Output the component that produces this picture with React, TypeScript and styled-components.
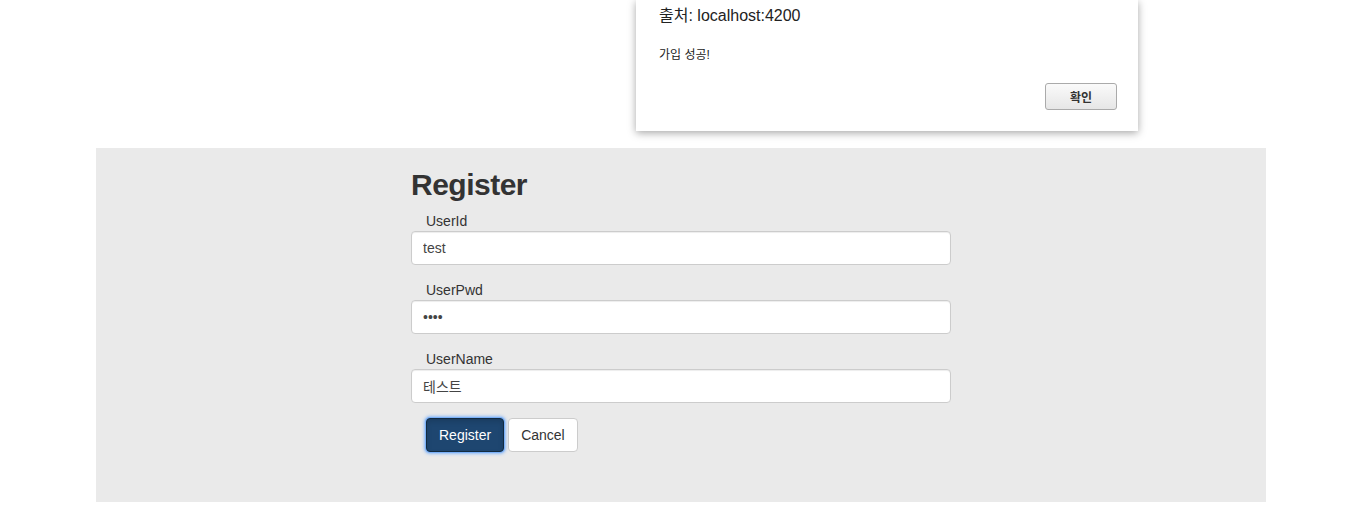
import React from 'react';
import styled, { createGlobalStyle } from 'styled-components';

const GlobalStyle = createGlobalStyle`
  html, body {
    margin: 0;
    padding: 0;
    background: #ffffff;
    font-family: "Liberation Sans", "Noto Sans CJK KR", Arial, sans-serif;
    font-size: 14px;
    color: #333333;
  }
  * {
    box-sizing: border-box;
  }
`;

const Page = styled.div`
  position: relative;
  width: 1350px;
  min-height: 527px;
  padding-top: 148px;
`;

const Panel = styled.section`
  margin-left: 96px;
  width: 1170px;
  background: #eaeaea;
  padding: 20px 0 50px 315px;
`;

const Form = styled.form`
  width: 540px;
`;

const Title = styled.h2`
  margin: 0 0 10px;
  font-size: 30px;
  line-height: 33px;
  font-weight: bold;
  letter-spacing: -0.5px;
  color: #333333;
`;

const Group = styled.div`
  margin-bottom: 15px;
`;

const Label = styled.label`
  display: block;
  padding-left: 15px;
  line-height: 20px;
  font-size: 14px;
  color: #333333;
`;

const Input = styled.input`
  display: block;
  width: 100%;
  height: 34px;
  padding: 6px 11px;
  font-family: inherit;
  font-size: 14px;
  color: #444444;
  background: #ffffff;
  border: 1px solid #cccccc;
  border-radius: 4px;
  box-shadow: inset 0 1px 1px rgba(0, 0, 0, 0.075);
  outline: none;
`;

const Actions = styled.div`
  display: flex;
  gap: 4px;
  padding-left: 15px;
`;

const Button = styled.button<{ $primary?: boolean }>`
  height: 34px;
  padding: 6px 12px;
  font-family: inherit;
  font-size: 14px;
  line-height: 20px;
  border-radius: 4px;
  cursor: pointer;
  color: ${(p) => (p.$primary ? '#ffffff' : '#333333')};
  background: ${(p) => (p.$primary ? '#1e4670' : '#ffffff')};
  border: 1px solid ${(p) => (p.$primary ? '#122b40' : '#cccccc')};
  box-shadow: ${(p) =>
    p.$primary
      ? '0 0 0 1px rgba(120, 175, 250, 0.9), 0 0 3px 2px rgba(110, 170, 250, 0.75), inset 0 3px 5px rgba(0,0,0,0.125)'
      : 'none'};
`;

const Dialog = styled.div`
  position: absolute;
  top: 0;
  left: 636px;
  width: 502px;
  height: 131px;
  background: #ffffff;
  box-shadow: 0 2px 8px rgba(0, 0, 0, 0.35);
  padding: 6px 21px 21px 23px;
  display: flex;
  flex-direction: column;
  color: #222222;
`;

const DialogTitle = styled.div`
  font-size: 16px;
  line-height: 20px;
`;

const DialogMessage = styled.div`
  margin-top: 21px;
  font-size: 12px;
  line-height: 16px;
`;

const DialogFooter = styled.div`
  margin-top: auto;
  display: flex;
  justify-content: flex-end;
`;

const DialogButton = styled.button`
  width: 72px;
  height: 27px;
  font-family: inherit;
  font-size: 12px;
  font-weight: bold;
  color: #333333;
  background: linear-gradient(#fafafa, #e6e6e6);
  border: 1px solid #aaaaaa;
  border-radius: 3px;
  cursor: pointer;
`;

export default function App() {
  return (
    <Page>
      <GlobalStyle />
      <Panel>
        <Form onSubmit={(e) => e.preventDefault()}>
          <Title>Register</Title>
          <Group>
            <Label htmlFor="userId">UserId</Label>
            <Input id="userId" defaultValue="test" />
          </Group>
          <Group>
            <Label htmlFor="userPwd">UserPwd</Label>
            <Input id="userPwd" type="password" defaultValue="test" />
          </Group>
          <Group>
            <Label htmlFor="userName">UserName</Label>
            <Input id="userName" defaultValue="테스트" />
          </Group>
          <Actions>
            <Button $primary type="submit">Register</Button>
            <Button type="button">Cancel</Button>
          </Actions>
        </Form>
      </Panel>
      <Dialog role="alertdialog">
        <DialogTitle>출처: localhost:4200</DialogTitle>
        <DialogMessage>가입 성공!</DialogMessage>
        <DialogFooter>
          <DialogButton>확인</DialogButton>
        </DialogFooter>
      </Dialog>
    </Page>
  );
}
